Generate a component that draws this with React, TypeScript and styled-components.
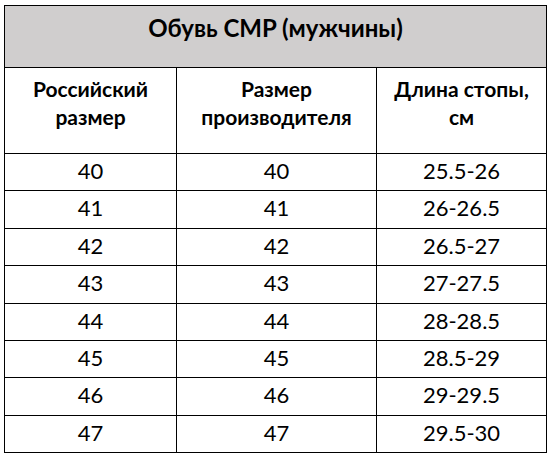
import React from 'react';
import styled, { createGlobalStyle } from 'styled-components';

const sizes = [
  { ru: '40', maker: '40', foot: '25.5-26' },
  { ru: '41', maker: '41', foot: '26-26.5' },
  { ru: '42', maker: '42', foot: '26.5-27' },
  { ru: '43', maker: '43', foot: '27-27.5' },
  { ru: '44', maker: '44', foot: '28-28.5' },
  { ru: '45', maker: '45', foot: '28.5-29' },
  { ru: '46', maker: '46', foot: '29-29.5' },
  { ru: '47', maker: '47', foot: '29.5-30' },
];

const GlobalStyle = createGlobalStyle`
  body {
    margin: 0;
    background: #fff;
    font-family: Lato, 'Open Sans', sans-serif;
    color: #000;
  }
`;

const Wrap = styled.div`
  padding: 5px 0 0 4px;
`;

const Table = styled.table`
  width: 542px;
  border-collapse: collapse;
  table-layout: fixed;
`;

const TitleCell = styled.th`
  height: 62px;
  box-sizing: border-box;
  background: #d0cece;
  border: 1.5px solid #000;
  font-size: 24px;
  font-weight: 700;
  vertical-align: top;
  padding: 7px 0 0;
  text-align: center;
`;

const HeadCell = styled.th`
  height: 86px;
  box-sizing: border-box;
  border: 1.5px solid #000;
  font-size: 21px;
  font-weight: 700;
  line-height: 28px;
  vertical-align: top;
  padding: 7px 14px 0;
  text-align: center;
`;

const Cell = styled.td`
  height: 37.4px;
  box-sizing: border-box;
  border: 1.5px solid #000;
  font-size: 22px;
  vertical-align: top;
  padding: 3px 0 0;
  text-align: center;
`;

const App = () => {
  return (
    <Wrap>
      <GlobalStyle />
      <Table>
        <colgroup>
          <col style={{ width: 172 }} />
          <col style={{ width: 200 }} />
          <col style={{ width: 170 }} />
        </colgroup>
        <thead>
          <tr>
            <TitleCell colSpan={3}>Обувь CMP (мужчины)</TitleCell>
          </tr>
          <tr>
            <HeadCell>Российский размер</HeadCell>
            <HeadCell>Размер производителя</HeadCell>
            <HeadCell>Длина стопы, см</HeadCell>
          </tr>
        </thead>
        <tbody>
          {sizes.map((row) => (
            <tr key={row.ru}>
              <Cell>{row.ru}</Cell>
              <Cell>{row.maker}</Cell>
              <Cell>{row.foot}</Cell>
            </tr>
          ))}
        </tbody>
      </Table>
    </Wrap>
  );
};

export default App;
